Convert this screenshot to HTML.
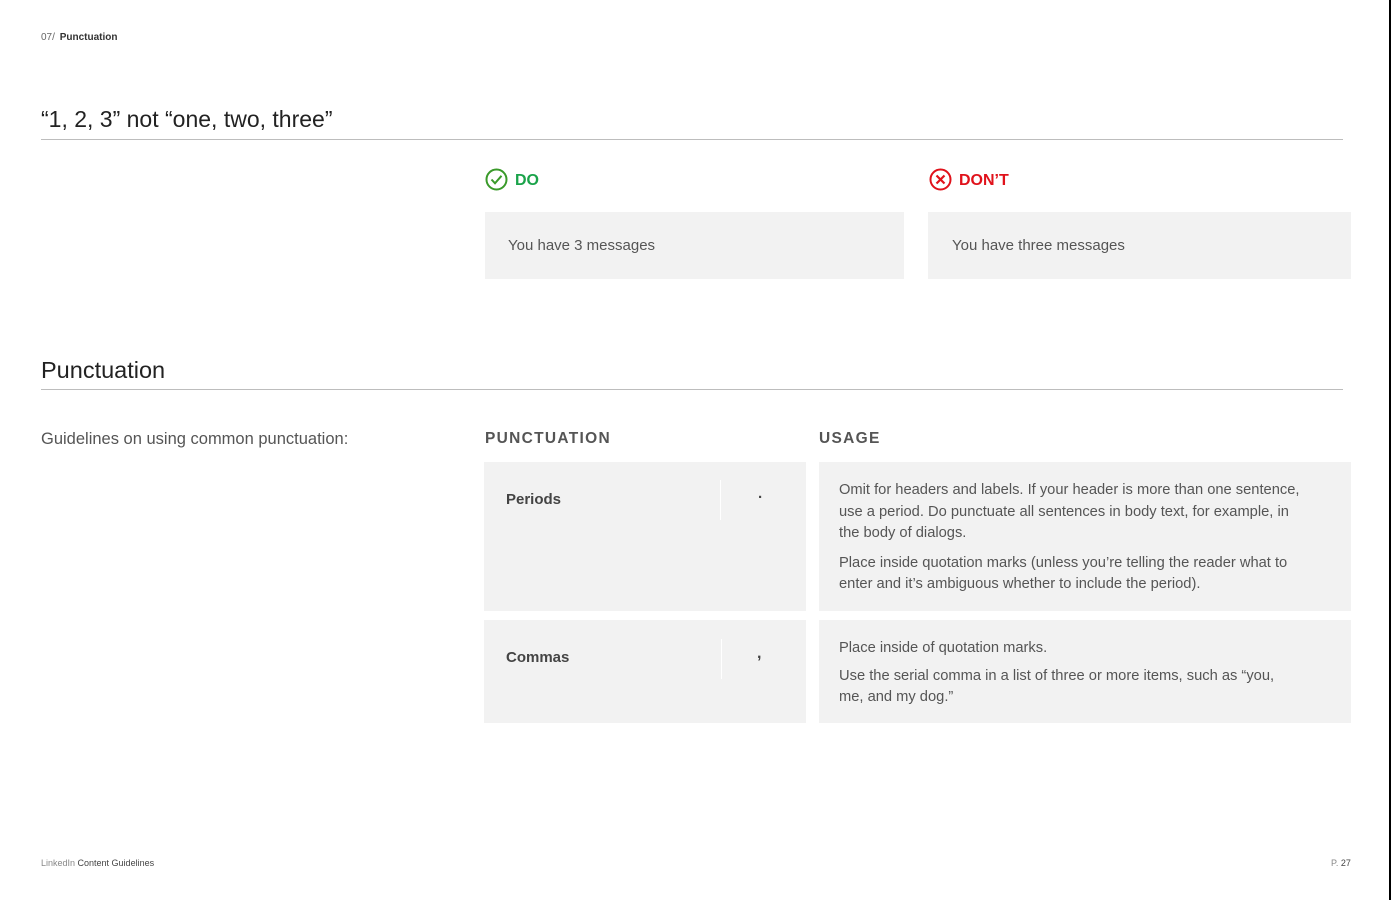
<!DOCTYPE html>
<html><head><meta charset="utf-8"><style>
*{margin:0;padding:0;box-sizing:border-box}
body{width:1391px;height:900px;background:#fff;position:relative;overflow:hidden;font-family:"Liberation Sans",sans-serif;color:#444}
.a{position:absolute;white-space:nowrap}
.box{position:absolute;background:#f2f2f2}
.hr{position:absolute;left:41px;width:1302px;height:1px;background:#bdbdbd}
p.u{font-size:14.7px;line-height:21.5px;color:#555;white-space:nowrap}
</style></head><body>
<div style="position:absolute;right:0;top:0;width:2px;height:900px;background:#000"></div>
<div class="a" style="left:41px;top:32px;font-size:10px;color:#666">07/ <b style="color:#333;margin-left:2px">Punctuation</b></div>
<div class="a" style="left:41px;top:106px;font-size:23px;color:#222">“1, 2, 3” not “one, two, three”</div>
<div class="hr" style="top:139px"></div>
<svg class="a" style="left:485px;top:168px" width="23" height="23" viewBox="0 0 23 23"><circle cx="11.5" cy="11.5" r="10" fill="none" stroke="#3a9a2a" stroke-width="2"/><path d="M6.5 11.5l3.5 3.8 6.5-7.5" fill="none" stroke="#3a9a2a" stroke-width="2"/></svg>
<div class="a" style="left:515px;top:172px;font-size:16px;font-weight:bold;color:#1aa34a">DO</div>
<svg class="a" style="left:929px;top:168px" width="23" height="23" viewBox="0 0 23 23"><circle cx="11.5" cy="11.5" r="10" fill="none" stroke="#e0121b" stroke-width="2"/><path d="M7.5 7.5l8 8M15.5 7.5l-8 8" stroke="#e0121b" stroke-width="2.2"/></svg>
<div class="a" style="left:959px;top:172px;font-size:16px;font-weight:bold;color:#e0121b">DON’T</div>
<div class="box" style="left:485px;top:212px;width:419px;height:67px"></div>
<div class="a" style="left:508px;top:237px;font-size:15px;color:#555">You have 3 messages</div>
<div class="box" style="left:928px;top:212px;width:423px;height:67px"></div>
<div class="a" style="left:952px;top:237px;font-size:15px;color:#555">You have three messages</div>
<div class="a" style="left:41px;top:357px;font-size:23.5px;color:#222">Punctuation</div>
<div class="hr" style="top:389px"></div>
<div class="a" style="left:41px;top:430px;font-size:16.5px;color:#555">Guidelines on using common punctuation:</div>
<div class="a" style="left:485px;top:430px;font-size:15.5px;font-weight:bold;letter-spacing:1.3px;color:#555">PUNCTUATION</div>
<div class="a" style="left:819px;top:430px;font-size:15.5px;font-weight:bold;letter-spacing:1.3px;color:#555">USAGE</div>
<div class="box" style="left:484px;top:462px;width:322px;height:149px"></div>
<div class="a" style="left:506px;top:491px;font-size:15px;font-weight:bold;color:#444">Periods</div>
<div class="a" style="left:720px;top:480px;width:1px;height:40px;background:#fff"></div>
<div class="a" style="left:758px;top:489px;font-size:15px;font-weight:bold">·</div>
<div class="box" style="left:819px;top:462px;width:532px;height:149px;padding:18px 20px">
<p class="u">Omit for headers and labels. If your header is more than one sentence,<br>use a period. Do punctuate all sentences in body text, for example, in<br>the body of dialogs.</p>
<p class="u" style="margin-top:8px">Place inside quotation marks (unless you’re telling the reader what to<br>enter and it’s ambiguous whether to include the period).</p></div>
<div class="box" style="left:484px;top:620px;width:322px;height:103px"></div>
<div class="a" style="left:506px;top:649px;font-size:15px;font-weight:bold;color:#444">Commas</div>
<div class="a" style="left:721px;top:639px;width:1px;height:40px;background:#fff"></div>
<div class="a" style="left:757px;top:645px;font-size:16px;font-weight:bold">,</div>
<div class="box" style="left:819px;top:620px;width:532px;height:103px;padding:18px 20px">
<p class="u">Place inside of quotation marks.</p>
<p class="u" style="margin-top:6px">Use the serial comma in a list of three or more items, such as “you,<br>me, and my dog.”</p></div>
<div class="a" style="left:41px;top:858px;font-size:9px;color:#888">LinkedIn <span style="color:#444">Content Guidelines</span></div>
<div class="a" style="left:1331px;top:858px;font-size:9px;color:#888">P. <span style="color:#444">27</span></div>
</body></html>
